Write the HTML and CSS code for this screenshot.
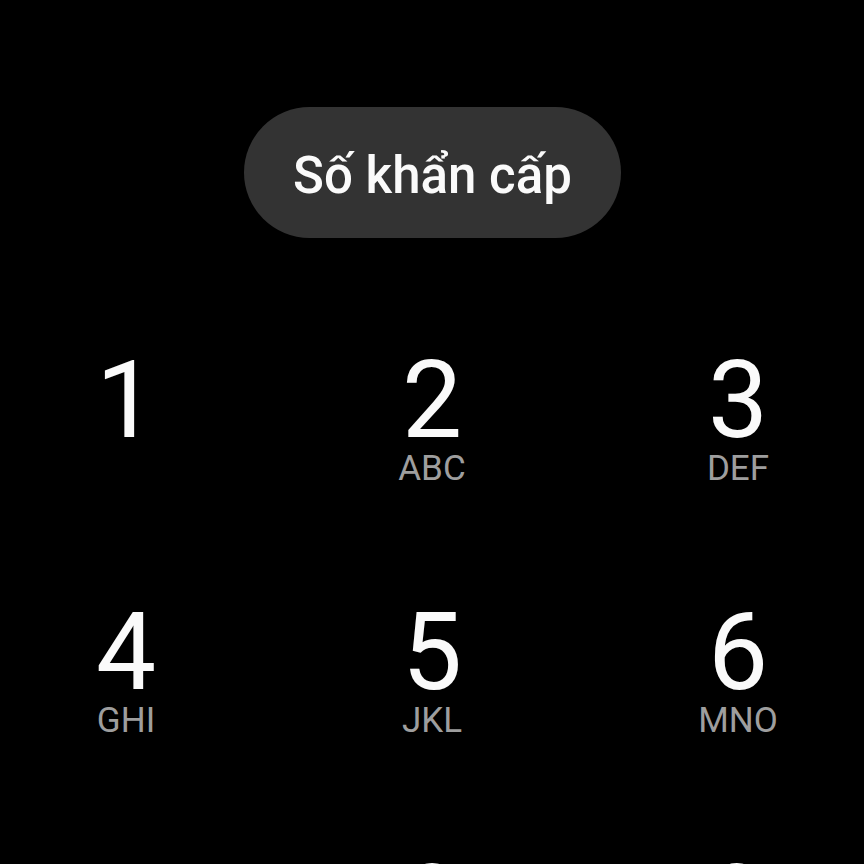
FILE: index.html
```html
<!DOCTYPE html>
<html lang="vi">
<head>
<meta charset="utf-8">
<title>Bàn phím</title>
<link rel="stylesheet" href="styles.css">
</head>
<body>
<div class="screen">
  <div class="top">
    <button class="pill">Số khẩn cấp</button>
  </div>
  <div class="keypad">
    <div class="key"><span class="digit">1</span><span class="letters">&nbsp;</span></div>
    <div class="key"><span class="digit">2</span><span class="letters">ABC</span></div>
    <div class="key"><span class="digit">3</span><span class="letters">DEF</span></div>
    <div class="key"><span class="digit">4</span><span class="letters">GHI</span></div>
    <div class="key"><span class="digit">5</span><span class="letters">JKL</span></div>
    <div class="key"><span class="digit">6</span><span class="letters">MNO</span></div>
    <div class="key"><span class="digit">7</span><span class="letters">PQRS</span></div>
    <div class="key"><span class="digit">8</span><span class="letters">TUV</span></div>
    <div class="key"><span class="digit">9</span><span class="letters">WXYZ</span></div>
  </div>
</div>
</body>
</html>
```
FILE: styles.css
```css
html, body {
  margin: 0;
  padding: 0;
  background: #000;
  height: 100%;
  overflow: hidden;
}
.screen {
  font-family: Roboto, "Noto Sans", sans-serif;
  color: #fafafa;
}
.top {
  display: flex;
  justify-content: center;
  padding-top: 107px;
}
.pill {
  width: 377px;
  height: 131px;
  border: 0;
  border-radius: 66px;
  background: #333333;
  color: #fafafa;
  font-family: Roboto, "Noto Sans", sans-serif;
  font-weight: 500;
  font-size: 51px;
  padding: 5px 0 0;
  margin-left: 1px;
}
.keypad {
  display: grid;
  grid-template-columns: repeat(3, 200px);
  column-gap: 106px;
  row-gap: 115px;
  justify-content: center;
  margin-top: 111px;
}
.key {
  display: flex;
  flex-direction: column;
  align-items: center;
  height: 137px;
}
.digit {
  font-size: 107px;
  line-height: 103px;
  font-weight: 400;
}
.letters {
  font-size: 35px;
  line-height: 34px;
  color: #9e9e9e;
}
```
